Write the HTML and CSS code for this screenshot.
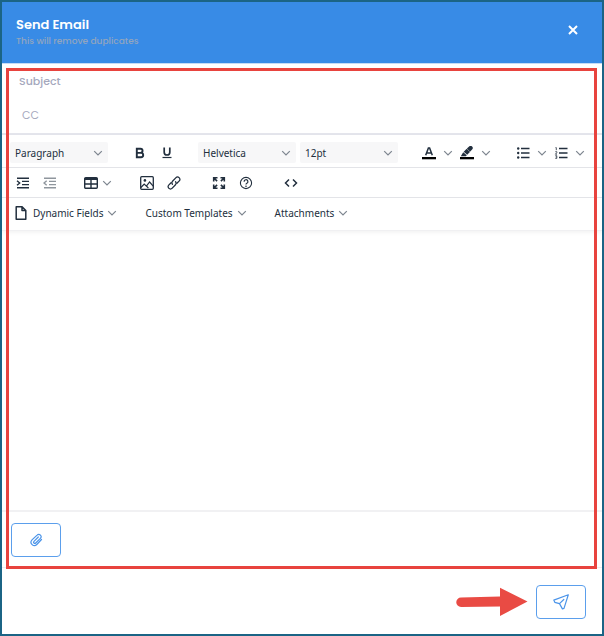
FILE: index.html
```html
<!DOCTYPE html>
<html lang="en">
<head>
<meta charset="utf-8">
<title>Send Email</title>
<meta name="viewport" content="width=device-width, initial-scale=1">
<link rel="stylesheet" href="styles.css">
</head>
<body>
<svg width="0" height="0" class="defs" aria-hidden="true">
  <symbol id="chev" viewBox="0 0 10 10"><path d="M1.200 3.200 5 7l3.800-3.800" fill="none" stroke="currentColor" stroke-width="1.200"/></symbol>
</svg>
<form class="dialog">
  <header class="header">
    <div>
      <h1 class="title">Send Email</h1>
      <p class="subtitle">This will remove duplicates</p>
    </div>
    <button type="button" class="close" aria-label="Close"><svg width="10" height="10" viewBox="0 0 10 10"><path d="M1 1l8 8M9 1l-8 8" stroke="#fff" stroke-width="2"/></svg></button>
  </header>

  <main class="body">
    <input class="field" type="text" placeholder="Subject" aria-label="Subject">
    <input class="field field-cc" type="text" placeholder="CC" aria-label="CC">

    <div class="toolbar">
      <div class="row row-format">
        <label class="pick"><select aria-label="Block format"><option>Paragraph</option></select><svg class="chev"><use href="#chev"/></svg></label>
        <div class="group">
          <button type="button" class="tool" aria-label="Bold"><svg width="12" height="12" viewBox="0 0 12 12"><path d="M2.800 1.800h3.700a2.050 2.050 0 0 1 0 4.100H2.800zM2.800 5.900h4.200a2.200 2.200 0 0 1 0 4.400H2.800z" fill="none" stroke="#222f3e" stroke-width="1.900"/></svg></button>
          <button type="button" class="tool" aria-label="Underline"><svg width="12" height="12" viewBox="0 0 12 12"><path d="M3.200 .5v4.700a2.800 2.800 0 0 0 5.600 0V.5" fill="none" stroke="#222f3e" stroke-width="1.700"/><path d="M1.500 10.500h9" stroke="#222f3e" stroke-width="1.200"/></svg></button>
        </div>
        <div class="group group-picks">
          <label class="pick"><select aria-label="Font"><option>Helvetica</option></select><svg class="chev"><use href="#chev"/></svg></label>
          <label class="pick"><select aria-label="Font size"><option>12pt</option></select><svg class="chev"><use href="#chev"/></svg></label>
        </div>
        <div class="group">
          <button type="button" class="tool narrow" aria-label="Text color"><svg width="14" height="14" viewBox="0 0 14 14"><path d="M3.700 9.300 6.400 2h1.200l2.700 7.300M4.900 6.900h4.200" fill="none" stroke="#222f3e" stroke-width="1.500"/><path d="M0 11h14v2.300H0z" fill="#000"/></svg></button>
          <button type="button" class="drop" aria-label="Text color options"><svg class="chev"><use href="#chev"/></svg></button>
          <button type="button" class="tool narrow" aria-label="Background color"><svg width="14" height="14" viewBox="0 0 14 14"><path d="M.8 10.200 3.200 6.200l3.600 3-1 1zM3.700 5.700 6.700 2.800l3.200 3.200-2.700 2.800zM6.900 2.600 9.100.5a2.100 2.100 0 0 1 3 3L10 5.700z" fill="#222f3e"/><path d="M0 11h14v2.300H0z" fill="#000"/></svg></button>
          <button type="button" class="drop" aria-label="Background color options"><svg class="chev"><use href="#chev"/></svg></button>
        </div>
        <div class="group">
          <button type="button" class="tool narrow" aria-label="Bullet list"><svg width="14" height="12" viewBox="0 0 14 12"><path d="M5 1.500h8.500M5 6h8.500M5 10.500h8.500" stroke="#222f3e" stroke-width="1.500"/><g fill="#222f3e"><circle cx="2.200" cy="1.500" r="1.200"/><circle cx="2.200" cy="6" r="1.200"/><circle cx="2.200" cy="10.500" r="1.200"/></g></svg></button>
          <button type="button" class="drop" aria-label="Bullet list options"><svg class="chev"><use href="#chev"/></svg></button>
          <button type="button" class="tool narrow" aria-label="Numbered list"><svg width="14" height="12" viewBox="0 0 14 12"><path d="M5 1.500h8.500M5 6h8.500M5 10.500h8.500" stroke="#222f3e" stroke-width="1.500"/><path d="M1.500 .6h.8v2.600M1.300 4.700h1.500v1L1.400 7.200H3M1.300 8.700h1.500v2.700H1.300M1.700 10h1" fill="none" stroke="#222f3e" stroke-width=".8"/></svg></button>
          <button type="button" class="drop" aria-label="Numbered list options"><svg class="chev"><use href="#chev"/></svg></button>
        </div>
      </div>

      <div class="row row-insert">
        <div class="group">
          <button type="button" class="tool" aria-label="Increase indent"><svg width="14" height="12" viewBox="0 0 14 12"><path d="M1 1.200h12M6 4.400h7M6 7.600h7M1 10.800h12" stroke="#222f3e" stroke-width="1.400"/><path d="M1 3.700 3.700 6 1 8.300" fill="none" stroke="#222f3e" stroke-width="1.400"/></svg></button>
          <button type="button" class="tool" aria-label="Decrease indent" disabled><svg width="14" height="12" viewBox="0 0 14 12"><path d="M1 1.200h12M6 4.400h7M6 7.600h7M1 10.800h12" stroke="#222f3e" stroke-width="1.400"/><path d="M3.700 3.700 1 6l2.700 2.300" fill="none" stroke="#222f3e" stroke-width="1.400"/></svg></button>
        </div>
        <div class="group">
          <button type="button" class="tool table" aria-label="Table"><svg width="14" height="12" viewBox="0 0 14 12"><rect x=".7" y=".7" width="12.600" height="10.600" rx="1" fill="none" stroke="#222f3e" stroke-width="1.400"/><path d="M.7 2h12.600" stroke="#222f3e" stroke-width="2"/><path d="M.7 7h12.600M7 2v9.500" stroke="#222f3e" stroke-width="1.400"/></svg><svg class="chev"><use href="#chev"/></svg></button>
        </div>
        <div class="group">
          <button type="button" class="tool" aria-label="Image"><svg width="14" height="14" viewBox="0 0 14 14"><rect x=".7" y=".7" width="12.600" height="12.600" rx="1" fill="none" stroke="#222f3e" stroke-width="1.300"/><circle cx="4.900" cy="4.400" r="1.300" fill="#222f3e"/><path d="M.9 11.500 4.200 8l2.200 2.100L9.600 6l3.600 4.200M6.400 10l2 2.200" fill="none" stroke="#222f3e" stroke-width="1.200"/></svg></button>
          <button type="button" class="tool" aria-label="Link"><svg width="14" height="14" viewBox="0 0 14 14"><g fill="none" stroke="#222f3e" stroke-width="1.300" stroke-linecap="round"><path d="M5.400 8.200a2.200 2.200 0 0 1 .1-3L9 1.600a2.100 2.100 0 0 1 3 0l.3.300a2.100 2.100 0 0 1 0 3L9.900 7.300"/><path d="M8.600 5.800a2.200 2.200 0 0 1-.1 3L5 12.400a2.100 2.100 0 0 1-3 0l-.3-.3a2.100 2.100 0 0 1 0-3l2.400-2.400"/></g></svg></button>
        </div>
        <div class="group">
          <button type="button" class="tool" aria-label="Fullscreen"><svg width="14" height="14" viewBox="0 0 14 14"><path d="M1.700 5.500V1.700h3.800M1.700 1.700l3.400 3.400M8.500 1.700h3.800v3.800M12.300 1.700 8.900 5.100M1.700 8.500v3.800h3.800M1.700 12.300l3.400-3.400M12.300 8.500v3.800H8.500M12.300 12.300 8.900 8.900" fill="none" stroke="#222f3e" stroke-width="1.600"/></svg></button>
          <button type="button" class="tool" aria-label="Help"><svg width="14" height="14" viewBox="0 0 14 14"><circle cx="7" cy="7" r="5.600" fill="none" stroke="#222f3e" stroke-width="1.100"/><path d="M5.100 5.700a1.900 1.900 0 1 1 2.800 1.600c-.7.400-.9.600-.9 1.300" fill="none" stroke="#222f3e" stroke-width="1.200"/><circle cx="7" cy="10.200" r=".8" fill="#222f3e"/></svg></button>
        </div>
        <div class="group">
          <button type="button" class="tool" aria-label="Source code"><svg width="14" height="12" viewBox="0 0 14 12"><path d="M5 2.500 1.500 6 5 9.500M9 2.500 12.500 6 9 9.500" fill="none" stroke="#222f3e" stroke-width="1.500"/></svg></button>
        </div>
      </div>

      <div class="row row-menus">
        <button type="button" class="menu"><svg width="12" height="14" viewBox="0 0 12 14"><path d="M1.200.8h5.900l3.700 3.700v8.700H1.200zM7 .8v3.800h3.800" fill="none" stroke="#222f3e" stroke-width="1.500" stroke-linejoin="round"/></svg><span class="menu-text">Dynamic Fields</span><svg class="chev"><use href="#chev"/></svg></button>
        <button type="button" class="menu">Custom Templates<svg class="chev"><use href="#chev"/></svg></button>
        <button type="button" class="menu">Attachments<svg class="chev"><use href="#chev"/></svg></button>
      </div>
    </div>

    <textarea class="editor" aria-label="Message"></textarea>

    <div class="attach">
      <button type="button" class="action" aria-label="Attach file"><svg width="14" height="14" viewBox="0 0 14 14"><path d="M12 6.200 7.300 11.200a3.300 3.300 0 0 1-4.800-4.600L7.600 1.800a2.300 2.300 0 0 1 3.300 0 2.300 2.300 0 0 1 0 3.200L6.200 9.700a1.200 1.200 0 0 1-1.700-1.700L8.800 3.700" transform="translate(.5 .3)" fill="none" stroke="#4b94e9" stroke-width="1.200" stroke-linecap="round"/></svg></button>
    </div>
    <div class="highlight"></div>
  </main>

  <footer class="footer">
    <svg class="arrow" width="72" height="30" viewBox="0 0 72 30" aria-hidden="true"><path d="M5 10.500 44 9.500V.8L71.500 14.600 44 29V19.500L5 20a4.700 4.700 0 0 1 0-9.500z" fill="#e94b44"/></svg>
    <button type="submit" class="action" aria-label="Send"><svg width="18" height="18" viewBox="0 0 18 18"><path d="M16.300 1.800 1.800 7.100l1 2.200 4.700 1.300 2.900 5.300 1.600-.5zM7.500 10.600l4.300-4.100" fill="none" stroke="#4b94e9" stroke-width="1.200" stroke-linejoin="round" stroke-linecap="round"/></svg></button>
  </footer>
</form>
</body>
</html>
```
FILE: styles.css
```css
* { box-sizing: border-box; }

body {
  margin: 0;
  background: #fff;
  color: #222f3e;
  font-family: "Noto Sans", sans-serif;
  font-size: 10px;
}

button, input, select, textarea {
  margin: 0;
  padding: 0;
  border: 0;
  background: none;
  color: inherit;
  font: inherit;
}

svg { display: block; flex: none; }
.defs { position: absolute; }

.dialog {
  display: flex;
  flex-direction: column;
  min-height: 100vh;
  border: 2px solid #1b6485;
}

.header {
  display: flex;
  justify-content: space-between;
  align-items: flex-start;
  padding: 14px 24px 15px 14px;
  background: #388be6;
  border-bottom: 1px solid #c5dcf6;
  font-family: Poppins, Inter, sans-serif;
}

.title {
  margin: 0;
  color: #fff;
  font-size: 13px;
  font-weight: 600;
  line-height: 18px;
}

.subtitle {
  margin: 0;
  color: #91a5bf;
  font-size: 9px;
  font-weight: 500;
  line-height: 14px;
}

.close { padding: 9px 0; }

.body {
  position: relative;
  flex: 1;
  display: flex;
  flex-direction: column;
  border-bottom: 1px solid #eeeef2;
}

.highlight {
  position: absolute;
  inset: 4px 5px -2px 4px;
  border: 3px solid #e8433e;
  pointer-events: none;
}

.field {
  height: 34px;
  padding: 0 17px;
  font-family: Poppins, Inter, sans-serif;
  font-size: 11px;
  font-weight: 500;
}

.field::placeholder { color: #a5a8bd; opacity: 1; }

.field-cc {
  height: 37px;
  padding: 0 20px;
  border-bottom: 2px solid #e4e5ec;
  font-weight: 400;
}

.toolbar {
  position: relative;
  box-shadow: 0 2px 4px #0000000c;
}

.row {
  display: flex;
  align-items: center;
  gap: 18px;
  padding: 0 8px;
  border-bottom: 1px solid #e3e4e8;
}

.row-format { height: 33px; padding-top: 3px; }
.row-insert { height: 30px; padding: 0 7px; }

.row-menus {
  height: 33px;
  gap: 28px;
  padding: 0 13px 2px;
  border-bottom-color: #f0f0f2;
}

.group { display: flex; align-items: center; }
.group-picks { gap: 4px; }

.pick {
  display: flex;
  align-items: center;
  width: 98px;
  height: 21px;
  padding-right: 5px;
  border-radius: 2px;
  background: #f7f7f8;
}

.pick select {
  flex: 1;
  min-width: 0;
  height: 21px;
  padding-left: 5px;
  appearance: none;
}

.chev { width: 10px; height: 10px; color: #7d858f; }

.tool {
  display: flex;
  align-items: center;
  justify-content: center;
  width: 27px;
  height: 22px;
}

.tool:disabled { opacity: .5; }
.narrow { width: 26px; }
.table { width: 34px; gap: 4px; }

.drop {
  display: flex;
  align-items: center;
  justify-content: center;
  width: 12px;
  height: 22px;
}

.menu {
  display: flex;
  align-items: center;
  gap: 4px;
  height: 22px;
}

.menu-text { padding-left: 2px; }

.editor {
  flex: 1;
  width: 100%;
  min-height: 120px;
  padding: 16px;
  resize: none;
  outline: 0;
}

.attach {
  padding: 11px 9px 10px;
  border-top: 2px solid #f1f1f3;
}

.action {
  display: flex;
  align-items: center;
  justify-content: center;
  width: 50px;
  height: 34px;
  border: 1px solid #5b9fec;
  border-radius: 4px;
}

.footer {
  display: flex;
  justify-content: flex-end;
  align-items: center;
  gap: 8px;
  padding: 17px 16px 15px;
}
```
